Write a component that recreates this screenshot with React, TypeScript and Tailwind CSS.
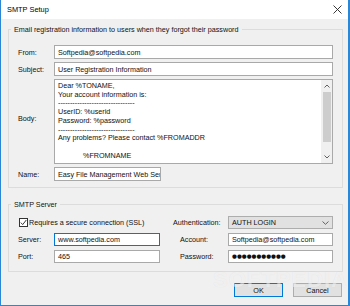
import React from "react";

const Input = ({ w, text, focused, children }: { w: string; text?: string; focused?: boolean; children?: React.ReactNode }) => (
  <div
    className={`${w} h-full bg-white border ${focused ? "border-[#0078d7]" : "border-[#a9a9a9]"} pl-[3px] flex items-center overflow-hidden whitespace-nowrap`}
  >
    {text}
    {children}
  </div>
);

export default function App() {
  return (
    <div className="relative w-[350px] h-[306px] overflow-hidden bg-[#f0f0f0] border-l border-r-2 border-b border-[#2b86d6] font-['Liberation_Sans',Arial,sans-serif] text-[7.2px] leading-[9px] text-[#111] flex flex-col">
      {/* title bar */}
      <div className="h-[19px] shrink-0 bg-white flex items-center justify-between pl-[6px] pr-[6px]">
        <span className="text-[7.4px] text-black">SMTP Setup</span>
        <svg width="9" height="9" viewBox="0 0 9 9">
          <path d="M0.5 0.5 L8.5 8.5 M8.5 0.5 L0.5 8.5" stroke="#222" strokeWidth="0.9" fill="none" />
        </svg>
      </div>

      <div className="pl-[7px] flex flex-col">
        {/* Group 1 */}
        <fieldset className="mt-[6px] w-[335px] border border-[#dcdcdc] pl-[9px] pr-[8px] pt-[11px] pb-[6px] min-w-0">
          <legend className="ml-[-7px] px-[3px] leading-[9px]">
            Email registration information to users when they forgot their password
          </legend>
          <div className="flex flex-col gap-[3px]">
            <div className="flex items-center h-[14px]">
              <span className="w-[36px]">From:</span>
              <Input w="w-[279px]" text="Softpedia@softpedia.com" />
            </div>
            <div className="flex items-center h-[14px]">
              <span className="w-[36px]">Subject:</span>
              <Input w="w-[279px]" text="User Registration Information" />
            </div>
            <div className="flex items-start h-[85px]">
              <span className="w-[36px] mt-[35px]">Body:</span>
              <div className="w-[279px] h-full bg-white border border-[#a9a9a9] flex">
                <div className="flex-1 pl-[3px] pt-[2px] leading-[8.7px] whitespace-pre overflow-hidden">
                  <div>Dear %TONAME,</div>
                  <div>Your account information is:</div>
                  <div>--------------------------------</div>
                  <div>UserID: %userid</div>
                  <div>Password: %password</div>
                  <div>--------------------------------</div>
                  <div>Any problems? Please contact %FROMADDR</div>
                  <div>&nbsp;</div>
                  <div className="pl-[25px]">%FROMNAME</div>
                </div>
                <div className="w-[11px] h-full bg-[#f0f0f0] flex flex-col items-center">
                  <div className="h-[12px] flex items-center justify-center">
                    <svg width="6" height="4" viewBox="0 0 6 4">
                      <path d="M0.5 3.5 L3 1 L5.5 3.5" stroke="#606060" strokeWidth="1" fill="none" />
                    </svg>
                  </div>
                  <div className="w-[8px] h-[50px] bg-[#cdcdcd]" />
                  <div className="flex-1" />
                  <div className="h-[12px] flex items-center justify-center">
                    <svg width="6" height="4" viewBox="0 0 6 4">
                      <path d="M0.5 0.5 L3 3 L5.5 0.5" stroke="#606060" strokeWidth="1" fill="none" />
                    </svg>
                  </div>
                </div>
              </div>
            </div>
            <div className="flex items-center h-[14px]">
              <span className="w-[36px]">Name:</span>
              <Input w="w-[107px]" text="Easy File Management Web Server" />
            </div>
          </div>
        </fieldset>

        {/* Group 2 */}
        <fieldset className="mt-[12px] w-[335px] border border-[#dcdcdc] pl-[9px] pr-[8px] pt-[7px] pb-[8px] min-w-0">
          <legend className="ml-[-7px] px-[3px] leading-[9px]">SMTP Server</legend>
          <div className="flex flex-col gap-[4px]">
            <div className="flex items-center h-[13px]">
              <div className="w-[142px] flex items-center">
                <div className="ml-[1px] w-[9px] h-[9px] border border-[#333] bg-white flex items-center justify-center">
                  <svg width="7" height="7" viewBox="0 0 7 7">
                    <path d="M0.8 3.6 L2.7 5.6 L6.3 1" stroke="#222" strokeWidth="0.9" fill="none" />
                  </svg>
                </div>
                <span className="ml-[1px]">Requires a secure connection (SSL)</span>
              </div>
              <span className="ml-[13px] w-[55px]">Authentication:</span>
              <div className="w-[105px] h-full bg-[#e1e1e1] border border-[#adadad] pl-[3px] pr-[3px] flex items-center justify-between">
                <span>AUTH LOGIN</span>
                <svg width="7" height="4" viewBox="0 0 7 4">
                  <path d="M0.5 0.5 L3.5 3.3 L6.5 0.5" stroke="#555" strokeWidth="0.9" fill="none" />
                </svg>
              </div>
            </div>
            <div className="flex items-center h-[13px]">
              <span className="w-[36px]">Server:</span>
              <Input w="w-[106px]" text="www.softpedia.com" focused />
              <span className="ml-[13px] w-[55px] pl-[7px]">Account:</span>
              <Input w="w-[105px]" text="Softpedia@softpedia.com" />
            </div>
            <div className="flex items-center h-[13px]">
              <span className="w-[36px]">Port:</span>
              <Input w="w-[106px]" text="465" />
              <span className="ml-[13px] w-[55px] pl-[7px]">Password:</span>
              <Input w="w-[105px]">
                <span className="font-['DejaVu_Sans',sans-serif] text-[5.6px] text-[#111]">●●●●●●●●●●●</span>
              </Input>
            </div>
          </div>
        </fieldset>

        {/* Buttons */}
        <div className="mt-[11px] pr-[6px] flex justify-end gap-[10px]">
          <div className="w-[49px] h-[14px] bg-[#e1e1e1] border border-[#0078d7] flex items-center justify-center">OK</div>
          <div className="w-[49px] h-[14px] bg-[#e1e1e1] border border-[#adadad] flex items-center justify-center">Cancel</div>
        </div>
      </div>

      {/* watermark */}
      <div className="absolute left-[212px] top-[268px] font-['Liberation_Sans',Arial,sans-serif] font-bold text-[22px] leading-[24px] tracking-[1px] text-[rgba(255,255,255,0.55)] [text-shadow:0_0_1px_rgba(0,0,0,0.08)] pointer-events-none">
        SOFTPEDIA
      </div>
    </div>
  );
}
